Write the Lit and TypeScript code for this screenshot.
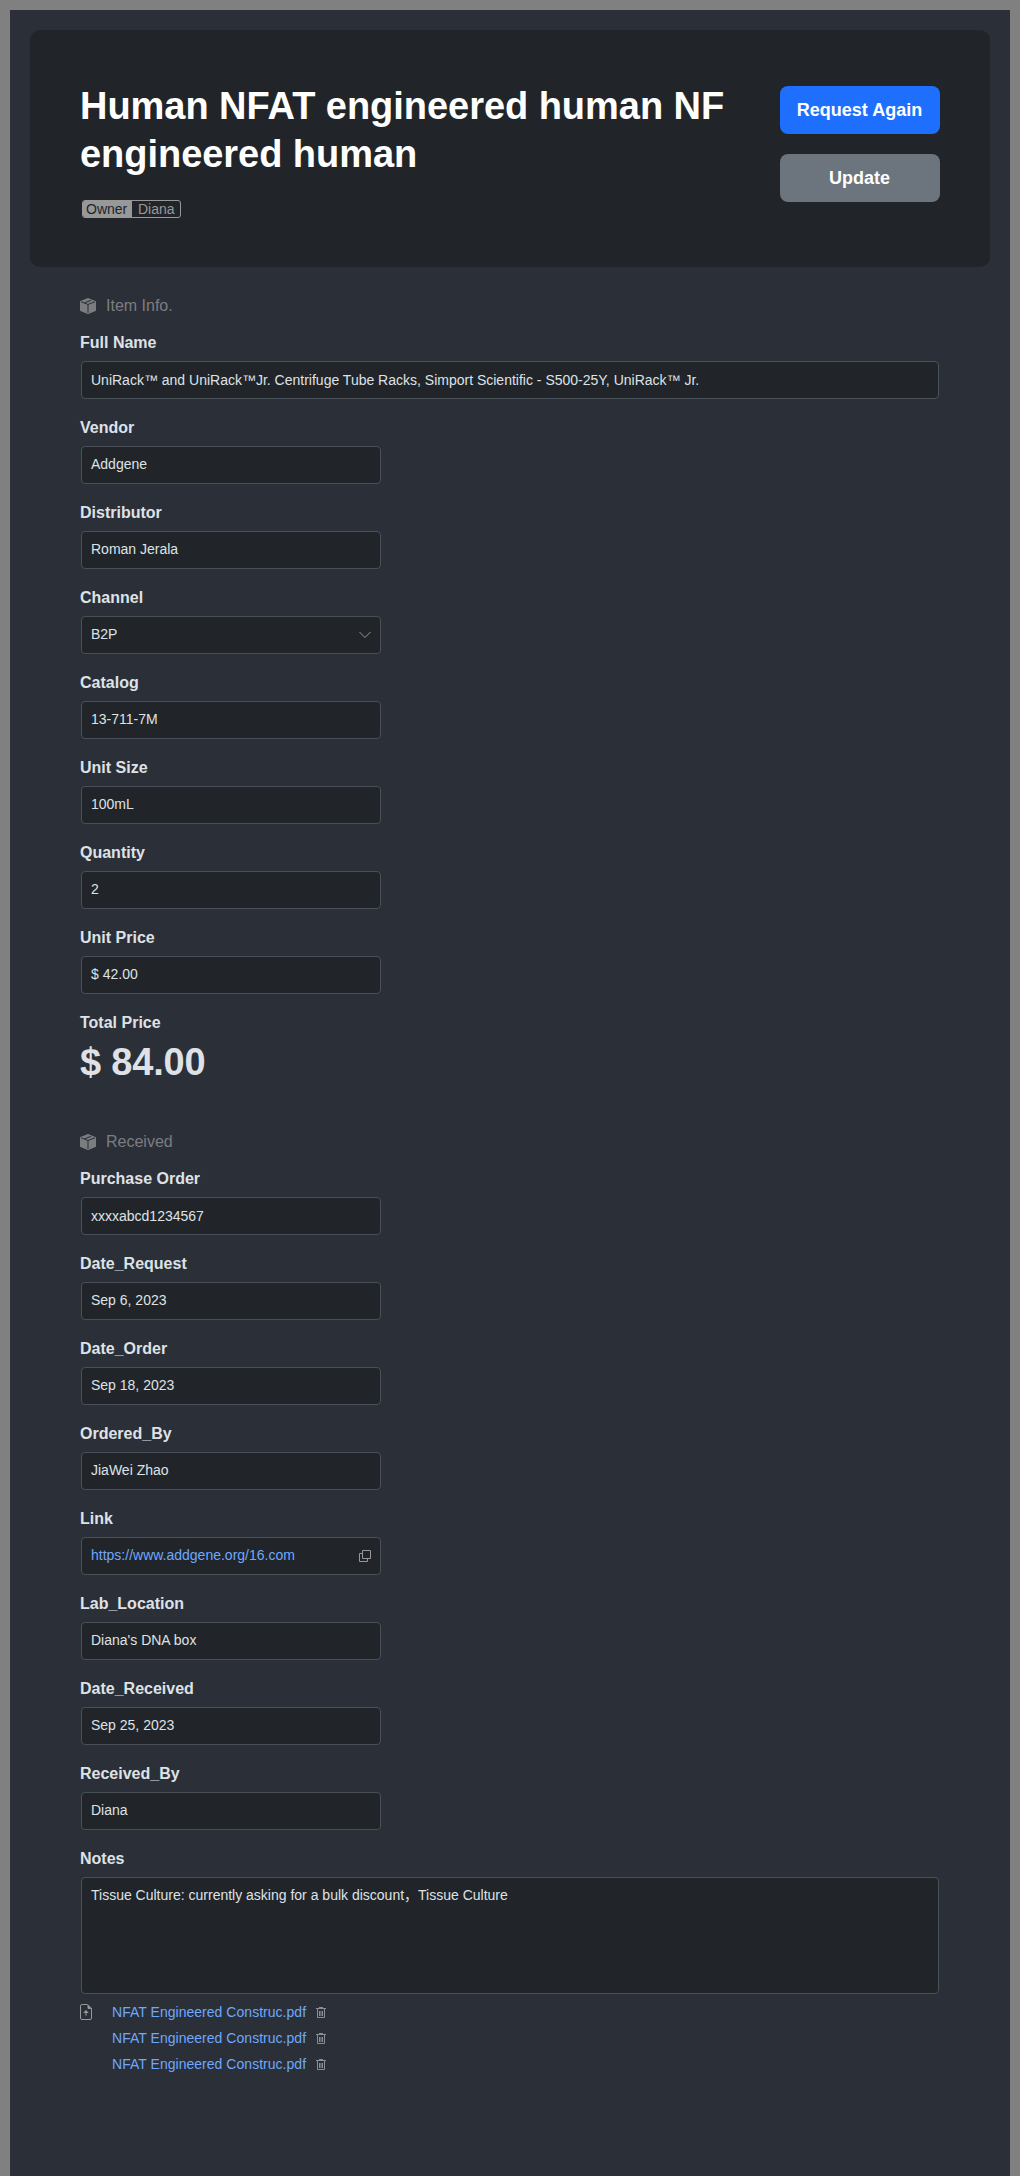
import { LitElement, html, css, svg, nothing } from "lit";
import { customElement } from "lit/decorators.js";

interface Field {
  label: string;
  value: string;
  kind?: "wide" | "lead" | "select" | "link" | "notes";
}

const itemFields: Field[] = [
  { label: "Full Name", value: "UniRack™ and UniRack™Jr. Centrifuge Tube Racks, Simport Scientific - S500-25Y, UniRack™ Jr.", kind: "wide" },
  { label: "Vendor", value: "Addgene" },
  { label: "Distributor", value: "Roman Jerala" },
  { label: "Channel", value: "B2P", kind: "select" },
  { label: "Catalog", value: "13-711-7M" },
  { label: "Unit Size", value: "100mL" },
  { label: "Quantity", value: "2" },
  { label: "Unit Price", value: "$ 42.00" },
];

const receivedFields: Field[] = [
  { label: "Purchase Order", value: "xxxxabcd1234567", kind: "lead" },
  { label: "Date_Request", value: "Sep 6, 2023" },
  { label: "Date_Order", value: "Sep 18, 2023" },
  { label: "Ordered_By", value: "JiaWei Zhao" },
  { label: "Link", value: "https://www.addgene.org/16.com", kind: "link" },
  { label: "Lab_Location", value: "Diana's DNA box" },
  { label: "Date_Received", value: "Sep 25, 2023" },
  { label: "Received_By", value: "Diana" },
  { label: "Notes", value: "Tissue Culture: currently asking for a bulk discount，Tissue Culture", kind: "notes" },
];

const files = ["NFAT Engineered Construc.pdf", "NFAT Engineered Construc.pdf", "NFAT Engineered Construc.pdf"];

const boxPath = svg`<path d="M15.528 2.973a.75.75 0 0 1 .472.696v8.662a.75.75 0 0 1-.472.696l-7.25 2.9a.75.75 0 0 1-.557 0l-7.25-2.9A.75.75 0 0 1 0 12.331V3.669a.75.75 0 0 1 .471-.696L7.443.184l.01-.003.268-.108a.75.75 0 0 1 .558 0l.269.108.01.003zM10.404 2 4.25 4.461 1.846 3.5 1 3.839v.4l6.5 2.6v7.922l.5.2.5-.2V6.84l6.5-2.6v-.4l-.846-.339L8 5.961 5.596 5l6.154-2.461z"/>`;
const uploadPath = svg`<path d="M9.500.500H4A1.500 1.500 0 0 0 2.500 2v12A1.500 1.500 0 0 0 4 15.500h8a1.500 1.500 0 0 0 1.500-1.500V4.500" fill="none" stroke="currentColor"/><path d="M9.500 0 14 4.500V5h-3a1.500 1.500 0 0 1-1.500-1.500zM8 6l2.800 3H8.500v2.700h-1V9H5.200z"/>`;

@customElement("app-root")
export class AppRoot extends LitElement {
  static styles = css`
    :host {
      display: block;
      font-family: "Liberation Sans", Arial, "Noto Sans CJK SC", sans-serif;
      color: #dee2e6;
    }
    * { box-sizing: border-box; }
    svg { display: block; flex: none; }
    .page {
      height: 2176px;
      padding: 20px;
      background: #2b2f37;
      border: 10px solid #808080;
      border-bottom: 0;
    }
    .hero {
      display: flex;
      justify-content: space-between;
      height: 237px;
      padding: 52px 50px 0;
      border-radius: 10px;
      background: #212529;
    }
    h1 {
      width: 660px;
      margin: 0 0 22px;
      font-size: 38px;
      line-height: 48px;
      letter-spacing: -0.04px;
      color: #fff;
    }
    .badge {
      display: inline-flex;
      height: 18px;
      margin-left: 2px;
      border: 1px solid #989898;
      border-radius: 3px;
      font-size: 14px;
      line-height: 17px;
      color: #989898;
      overflow: hidden;
    }
    .badge-key { width: 49px; padding-left: 3px; background: #989898; color: #212529; }
    .badge-value { width: 48px; padding-left: 6px; }
    .actions { display: flex; flex-direction: column; gap: 20px; padding-top: 4px; }
    .button {
      width: 160px;
      height: 48px;
      padding: 0 1px 0 0;
      border: 0;
      border-radius: 8px;
      font: bold 18px/48px "Liberation Sans", Arial, sans-serif;
      color: #fff;
    }
    .primary { background: #1f6fff; }
    .secondary { background: #6c757d; }
    .section { padding: 29px 50px 0; }
    .section-head {
      display: flex;
      align-items: center;
      gap: 10px;
      height: 20px;
      margin-bottom: 16px;
      font-size: 16px;
      color: #7b7d81;
    }
    .field { height: 85px; }
    .label { height: 29px; font-size: 16px; font-weight: bold; line-height: 22px; }
    .box {
      display: flex;
      justify-content: space-between;
      align-items: center;
      width: 300px;
      height: 38px;
      margin-left: 1px;
      padding: 0 9px;
      border: 1px solid #495057;
      border-radius: 4px;
      background: #212529;
      font-size: 14px;
      line-height: 20px;
      color: #dee2e6;
    }
    .box span { padding-bottom: 2px; }
    .box.wide, .box.notes { width: 858px; }
    .box.wide span, .box.lead span { padding-bottom: 0; }
    .box.notes { height: 117px; align-items: flex-start; padding-top: 7px; }
    .box.link, .file { color: #6ea8fe; }
    .icon { color: #96989a; }
    .total { height: 66px; }
    .amount {
      margin-top: -1px;
      font-size: 38px;
      font-weight: bold;
      line-height: 44px;
      letter-spacing: -0.2px;
    }
    .received { padding-top: 54px; }
    .field.last { height: 146px; }
    .attachments { display: flex; gap: 18px; padding: 10px 0 0; margin-left: -2px; }
    .files { display: flex; flex-direction: column; }
    .file { display: flex; gap: 9px; height: 26px; font-size: 14px; line-height: 16px; letter-spacing: 0.03px; }
    .trash { margin-top: 3px; color: #8b8d91; }
  `;

  private field(f: Field) {
    return html`
      <div class="field ${f.kind === "notes" ? "last" : ""}">
        <div class="label">${f.label}</div>
        <div class="box ${f.kind ?? ""}">
          <span>${f.value}</span>
          ${f.kind === "select"
            ? html`<svg class="icon" width="12" height="12" viewBox="0 0 12 12" fill="none" stroke="currentColor"><path d="M.5 3 6 8.500 11.500 3"/></svg>`
            : f.kind === "link"
            ? html`<svg class="icon" width="12" height="12" viewBox="0 0 12 12" fill="none" stroke="currentColor"><path d="M3.500.500h8v8h-8zM3 3.500H.500v8h8V9"/></svg>`
            : nothing}
        </div>
      </div>
    `;
  }

  private heading(text: string) {
    return html`
      <div class="section-head">
        <svg width="16" height="16" viewBox="0 0 16 16" fill="currentColor">${boxPath}</svg>
        <span>${text}</span>
      </div>
    `;
  }

  render() {
    return html`
      <div class="page">
        <div class="hero">
          <div>
            <h1>Human NFAT engineered human NF engineered human</h1>
            <div class="badge"><span class="badge-key">Owner</span><span class="badge-value">Diana</span></div>
          </div>
          <div class="actions">
            <button class="button primary">Request Again</button>
            <button class="button secondary">Update</button>
          </div>
        </div>
        <div class="section">
          ${this.heading("Item Info.")}
          ${itemFields.map((f) => this.field(f))}
          <div class="total">
            <div class="label">Total Price</div>
            <div class="amount">$ 84.00</div>
          </div>
        </div>
        <div class="section received">
          ${this.heading("Received")}
          ${receivedFields.map((f) => this.field(f))}
          <div class="attachments">
            <svg class="icon" width="16" height="16" viewBox="0 0 16 16" fill="currentColor">${uploadPath}</svg>
            <div class="files">
              ${files.map(
                (name) => html`
                  <div class="file">
                    <span>${name}</span>
                    <svg class="trash" width="12" height="12" viewBox="0 0 12 12" fill="none" stroke="currentColor">
                      <path d="M1 1.500h10M4 .500h4M2.500 2v8.500h7V2M4.500 4v5M6 4v5M7.500 4v5"/>
                    </svg>
                  </div>
                `,
              )}
            </div>
          </div>
        </div>
      </div>
    `;
  }
}
